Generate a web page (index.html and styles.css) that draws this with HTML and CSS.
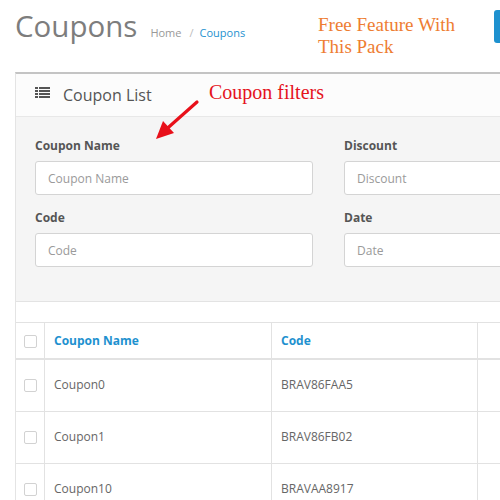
FILE: index.html
```html
<!DOCTYPE html>
<html lang="en">
<head>
<meta charset="utf-8">
<title>Coupons</title>
<link rel="stylesheet" href="styles.css">
</head>
<body>
<div class="page">
  <header class="page-header">
    <div class="title-group">
      <h1 class="title">Coupons</h1>
      <ul class="breadcrumb">
        <li><a href="#" class="crumb">Home</a></li>
        <li class="sep">/</li>
        <li><a href="#" class="crumb crumb-active">Coupons</a></li>
      </ul>
    </div>
    <p class="note note-orange">Free Feature With<br>This Pack</p>
    <button class="btn-primary" type="button" aria-label="Add"></button>
  </header>

  <section class="panel">
    <div class="panel-heading">
      <svg class="list-icon" width="15" height="11" viewBox="0 0 15 11" aria-hidden="true">
        <rect x="0" y="0" width="3" height="2" fill="#555"/>
        <rect x="4" y="0" width="11" height="2" fill="#555"/>
        <rect x="0" y="3" width="3" height="2" fill="#555"/>
        <rect x="4" y="3" width="11" height="2" fill="#555"/>
        <rect x="0" y="6" width="3" height="2" fill="#555"/>
        <rect x="4" y="6" width="11" height="2" fill="#555"/>
        <rect x="0" y="9" width="3" height="2" fill="#555"/>
        <rect x="4" y="9" width="11" height="2" fill="#555"/>
      </svg>
      <h3 class="panel-title">Coupon List</h3>
      <span class="note note-red">Coupon filters</span>
    </div>
    <svg class="arrow" width="50" height="44" viewBox="0 0 50 44" aria-hidden="true">
      <line x1="47" y1="4" x2="16" y2="31.5" stroke="#e8101a" stroke-width="3.2" stroke-linecap="round"/>
      <polygon points="6,41 24,35 13,23" fill="#e8101a"/>
    </svg>

    <div class="well">
      <div class="filter-grid">
        <div class="form-group">
          <label class="control-label">Coupon Name</label>
          <input class="form-control" type="text" placeholder="Coupon Name">
        </div>
        <div class="form-group">
          <label class="control-label">Discount</label>
          <input class="form-control" type="text" placeholder="Discount">
        </div>
        <div class="form-group">
          <label class="control-label">Code</label>
          <input class="form-control" type="text" placeholder="Code">
        </div>
        <div class="form-group">
          <label class="control-label">Date</label>
          <input class="form-control" type="text" placeholder="Date">
        </div>
      </div>
    </div>

    <div class="table-wrap">
      <table class="list-table">
        <colgroup>
          <col class="c-check">
          <col class="c-name">
          <col class="c-code">
          <col class="c-rest">
        </colgroup>
        <thead>
          <tr>
            <th class="cell-check"><input type="checkbox" class="check"></th>
            <th><a href="#" class="sort">Coupon Name</a></th>
            <th><a href="#" class="sort">Code</a></th>
            <th></th>
          </tr>
        </thead>
        <tbody>
          <tr>
            <td class="cell-check"><input type="checkbox" class="check"></td>
            <td>Coupon0</td>
            <td>BRAV86FAA5</td>
            <td></td>
          </tr>
          <tr>
            <td class="cell-check"><input type="checkbox" class="check"></td>
            <td>Coupon1</td>
            <td>BRAV86FB02</td>
            <td></td>
          </tr>
          <tr>
            <td class="cell-check"><input type="checkbox" class="check"></td>
            <td>Coupon10</td>
            <td>BRAVAA8917</td>
            <td></td>
          </tr>
        </tbody>
      </table>
    </div>
  </section>
</div>
</body>
</html>
```

FILE: styles.css
```css
* {
  box-sizing: border-box;
}

html, body {
  margin: 0;
  padding: 0;
  background: #fff;
}

body {
  width: 500px;
  height: 500px;
  overflow: hidden;
  font-family: "Open Sans", "DejaVu Sans", sans-serif;
  font-size: 12px;
  color: #666;
}

.page {
  width: 640px;
}

/* ---------- header ---------- */
.page-header {
  display: flex;
  align-items: flex-start;
  width: 534px;
  height: 72px;
}

.title-group {
  flex: 0 0 318px;
  display: flex;
  align-items: baseline;
  padding-left: 15px;
  margin-top: 9px;
}

.title {
  margin: 0;
  font-size: 29.5px;
  line-height: 33px;
  font-weight: 400;
  color: #7d7d7d;
}

.breadcrumb {
  display: flex;
  list-style: none;
  margin: 0 0 0 13px;
  padding: 0;
  font-size: 11px;
  line-height: 16px;
}

.crumb {
  color: #999;
  text-decoration: none;
}

.crumb-active {
  color: #1e91cf;
}

.sep {
  color: #bbb;
  margin: 0 6px 0 8px;
}

.note {
  margin: 0;
  font-family: "Liberation Serif", "Times New Roman", serif;
  font-weight: 400;
}

.note-orange {
  margin-top: 14px;
  font-size: 19px;
  line-height: 22px;
  color: #ee7d32;
}

.btn-primary {
  margin-left: auto;
  margin-top: 10px;
  width: 40px;
  height: 33px;
  border: 0;
  border-radius: 3px;
  background: #1e91cf;
  padding: 0;
}

/* ---------- panel ---------- */
.panel {
  position: relative;
  margin-left: 15px;
  border: 1px solid #e4e4e4;
  border-top: 2px solid #c4c4c4;
  border-right: 0;
  background: #fff;
}

.panel-heading {
  position: relative;
  display: flex;
  align-items: center;
  height: 43px;
  padding: 10px 19px;
  background: #fcfcfc;
  border-bottom: 1px solid #e8e8e8;
}

.list-icon {
  flex: 0 0 auto;
  margin-bottom: 5px;
  margin-right: 13px;
}

.panel-title {
  margin: 0;
  font-size: 16px;
  line-height: 22px;
  font-weight: 400;
  color: #555;
}

.note-red {
  position: absolute;
  left: 193px;
  top: 7px;
  font-size: 20px;
  line-height: 23px;
  color: #e5131c;
  white-space: nowrap;
}

.arrow {
  position: absolute;
  left: 134px;
  top: 24px;
}

/* ---------- filters ---------- */
.well {
  background: #f5f5f5;
  border-bottom: 1px solid #e3e3e3;
  padding: 20px 19px 34px 19px;
}

.filter-grid {
  display: grid;
  grid-template-columns: 278px 278px;
  column-gap: 31px;
  row-gap: 14px;
}

.control-label {
  display: block;
  font-weight: 700;
  font-size: 12px;
  line-height: 17px;
  color: #555;
  margin-bottom: 7px;
}

.form-control {
  display: block;
  width: 100%;
  height: 34px;
  padding: 0 12px;
  border: 1px solid #d4d4d4;
  border-radius: 3px;
  background: #fff;
  font-family: "Open Sans", "DejaVu Sans", sans-serif;
  font-size: 12px;
  color: #555;
}

.form-control::placeholder {
  color: #9a9a9a;
}

/* ---------- table ---------- */
.table-wrap {
  margin-top: 20px;
}

.list-table {
  table-layout: fixed;
  width: 620px;
  border-collapse: separate;
  border-spacing: 0;
  border-top: 1px solid #e2e2e2;
}

.c-check { width: 29px; }
.c-name { width: 227px; }
.c-code { width: 206px; }
.c-rest { width: 158px; }

.list-table th,
.list-table td {
  border-right: 1px solid #e2e2e2;
  border-bottom: 1px solid #e2e2e2;
  padding: 0 9px 2px;
  vertical-align: middle;
  text-align: left;
  font-size: 12px;
  line-height: 17px;
  color: #666;
  white-space: nowrap;
}

.list-table th {
  height: 37px;
  border-bottom-width: 2px;
  padding-bottom: 0;
  font-weight: 700;
}

.list-table td {
  height: 52px;
}

.list-table .cell-check {
  padding: 0 0 2px;
  text-align: center;
}

.list-table th.cell-check {
  padding: 0;
}

.sort {
  color: #1e91cf;
  text-decoration: none;
}

.check {
  appearance: none;
  -webkit-appearance: none;
  display: inline-block;
  width: 13px;
  height: 13px;
  margin: 0;
  vertical-align: middle;
  border: 1px solid #d2d2d2;
  border-radius: 2px;
  background: #fff;
}
```
